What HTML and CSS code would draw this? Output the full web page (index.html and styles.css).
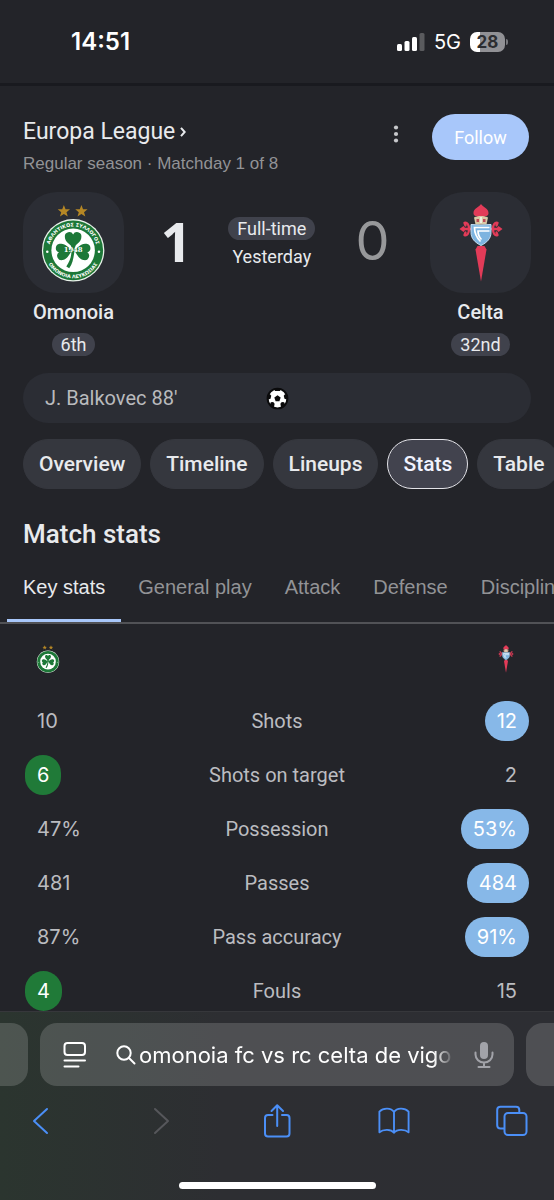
FILE: index.html
```html
<!DOCTYPE html>
<html lang="en">
<head>
<meta charset="utf-8">
<meta name="viewport" content="width=device-width, initial-scale=1">
<title>Omonoia vs Celta – Match stats</title>
<link rel="stylesheet" href="styles.css">
</head>
<body>
<svg class="defs" aria-hidden="true">
  <symbol id="crest-omonoia" viewBox="0 0 70 80">
    <path fill="#b58725" d="M25.500 1l1.700 4.300 4.600.2-3.600 2.900 1.300 4.500-4-2.600-4 2.600 1.300-4.500-3.600-2.900 4.600-.2z"/>
    <path fill="#b58725" d="M43.500 1l1.700 4.300 4.600.2-3.600 2.900 1.300 4.500-4-2.600-4 2.600 1.300-4.500-3.600-2.900 4.600-.2z"/>
    <circle cx="35" cy="47.500" r="32" fill="#e9f2ea"/>
    <circle cx="35" cy="47.500" r="30.700" fill="#1d7838"/>
    <circle cx="35" cy="47.500" r="22.300" fill="#fff"/>
    <g fill="#1d7838">
      <path transform="translate(35 46)" d="M0 0C-2-5-8.500-6.500-8.500-12.500a4.500 4.500 0 0 1 8.500-2.300a4.500 4.500 0 0 1 8.500 2.300C8.500-6.500 2-5 0 0z"/>
      <path transform="translate(35 47) rotate(-100)" d="M0 0C-3-5-8.500-6.500-8.500-12.500a4.500 4.500 0 0 1 8.500-2.300a4.500 4.500 0 0 1 8.500 2.300C8.500-6.500 3-5 0 0z"/>
      <path transform="translate(35 47) rotate(100)" d="M0 0C-3-5-8.500-6.500-8.500-12.500a4.500 4.500 0 0 1 8.500-2.300a4.500 4.500 0 0 1 8.500 2.300C8.500-6.500 3-5 0 0z"/>
      <path d="M33 42h4.500c-2 9-1.500 17-6.500 24l-3-2C33 57 34 50 33 42z"/>
    </g>
    <circle cx="8.500" cy="49" r="1.300" fill="#fff"/>
    <circle cx="61.500" cy="49" r="1.300" fill="#fff"/>
  </symbol>
  <symbol id="crest-celta" viewBox="0 0 44 78">
    <g fill="#e23b58">
      <path d="M22 0c1.500 3 8 4.500 7.500 9.500-.3 2.500-2.500 3-3.500 2.500l-.5 2h-7l-.5-2c-1 .5-3.200 0-3.500-2.500C14 4.500 20.500 3 22 0z"/>
      <path d="M18.500 42h7l2 3.500L22 77.500 16.500 45.500z"/>
      <path d="M.5 25l4-3 1.500 1.800h6v2.400H6L4.500 28z"/>
      <path d="M43.500 25l-4-3-1.500 1.800h-6v2.400h6l1.500 1.800z"/>
    </g>
    <g fill="none" stroke="#e23b58" stroke-width="2.300" stroke-linecap="round">
      <path d="M10 25C10 20.500 8 18 5.500 18.800M10 25C10 29.500 8 32 5.500 31.200M6.500 21.500l-1-2.500M6.500 28.500l-1 2.500"/>
      <path d="M34 25c0-4.500 2-7 4.500-6.200M34 25c0 4.500 2 7 4.500 6.200M37.500 21.500l1-2.500M37.500 28.500l1 2.500"/>
    </g>
    <path fill="#d9c9a5" d="M15 13.500c4-2 10-2 14 0l-1.500 7h-11z"/>
    <path fill="#bd4a58" d="M17.500 15h2.500v3h-2.500zM24 15h2.500v3H24z"/>
    <path fill="#eef0e0" d="M21 13h2v6h-2z"/>
    <path fill="#7db4e0" stroke="#c4def2" stroke-width="1" d="M12 20.500q10 1 20 0v8c0 6-4 10-10 13-6-3-10-7-10-13z"/>
    <path fill="none" stroke="#fff" stroke-width="1.700" d="M30.500 23.500H15.500c0 6 2 10 6 14M30.500 27H19c0 3 1 6 3.500 8.500"/>
  </symbol>
</svg>

<div class="phone">
  <header class="status">
    <time class="clock">14:51</time>
    <div class="signals">
      <svg class="bars" viewBox="0 0 28 18" aria-label="Signal"><g fill="#fff"><rect y="11" width="5" height="7" rx="1.500"/><rect x="7.500" y="8" width="5" height="10" rx="1.500"/><rect x="15" y="4" width="5" height="14" rx="1.500"/><rect x="22.500" y="0" width="5" height="18" rx="1.500" opacity=".25"/></g></svg>
      <span class="network">5G</span>
      <span class="battery">28</span>
    </div>
  </header>

  <main class="match">
    <section class="competition">
      <div class="competition-text">
        <h1><a href="#league">Europa League<svg viewBox="0 0 6 10" aria-hidden="true"><path d="M1 .8 4.700 5 1 9.200"/></svg></a></h1>
        <p>Regular season · Matchday 1 of 8</p>
      </div>
      <button class="more" type="button" aria-label="More options"><svg viewBox="0 0 6 20"><circle cx="3" cy="3.500" r="2.100"/><circle cx="3" cy="10" r="2.100"/><circle cx="3" cy="16.500" r="2.100"/></svg></button>
      <button class="follow" type="button">Follow</button>
    </section>

    <section class="scoreboard" aria-label="Score">
      <div class="team">
        <div class="tile">
          <svg class="crest" viewBox="0 0 70 80" role="img" aria-label="Omonoia crest">
            <use href="#crest-omonoia"/>
            <path id="arc-top" fill="none" d="M10.500 47.500a24.500 24.500 0 0 1 49 0"/>
            <path id="arc-bottom" fill="none" d="M6.300 47.500a28.700 28.700 0 0 0 57.400 0"/>
            <g class="crest-text">
              <text><textPath href="#arc-top" startOffset="50%">ΑΘΛΗΤΙΚΟΣ ΣΥΛΛΟΓΟΣ</textPath></text>
              <text><textPath href="#arc-bottom" startOffset="50%">ΟΜΟΝΟΙΑ ΛΕΥΚΩΣΙΑΣ</textPath></text>
              <text class="year" x="35" y="49">1948</text>
            </g>
          </svg>
        </div>
        <span class="team-name">Omonoia</span>
        <span class="pill">6th</span>
      </div>
      <strong class="score winner">1</strong>
      <div class="state">
        <span class="pill">Full-time</span>
        <span>Yesterday</span>
      </div>
      <span class="score">0</span>
      <div class="team">
        <div class="tile"><svg class="crest" viewBox="0 0 44 78" role="img" aria-label="Celta crest"><use href="#crest-celta"/></svg></div>
        <span class="team-name">Celta</span>
        <span class="pill">32nd</span>
      </div>
    </section>

    <section class="goals" aria-label="Goals">
      <span>J. Balkovec 88'</span>
      <svg viewBox="0 0 24 24" role="img" aria-label="Goal">
        <circle cx="12" cy="12" r="10.300" fill="#fff" stroke="#0b0b0c" stroke-width="2"/>
        <g fill="#0b0b0c"><path d="M12 8.600l3.300 2.400-1.300 3.900h-4l-1.300-3.900z"/><path d="M8 1.500h8l-1.500 2.800h-5zM1 8.500l3-1.200 1.500 1.900-.8 3-3.700 1.300zM23 8.500l-3-1.200-1.500 1.900.8 3 3.700 1.300zM4 19l1-3.200 2.500-.2 1.500 2-.8 4.400zM20 19l-1-3.200-2.500-.2-1.500 2 .8 4.400z"/></g>
      </svg>
    </section>

    <nav class="chips" aria-label="Match sections">
      <a href="#overview">Overview</a>
      <a href="#timeline">Timeline</a>
      <a href="#lineups">Lineups</a>
      <a href="#stats" class="current" aria-current="page">Stats</a>
      <a href="#table">Table</a>
    </nav>

    <h2 id="stats">Match stats</h2>

    <div class="tabs" role="tablist" aria-labelledby="stats">
      <button type="button" role="tab" aria-selected="true">Key stats</button>
      <button type="button" role="tab" aria-selected="false">General play</button>
      <button type="button" role="tab" aria-selected="false">Attack</button>
      <button type="button" role="tab" aria-selected="false">Defense</button>
      <button type="button" role="tab" aria-selected="false">Discipline</button>
    </div>

    <table class="stats" aria-labelledby="stats">
      <thead>
        <tr>
          <th scope="col"><svg class="mini" viewBox="0 0 70 80" role="img" aria-label="Omonoia"><use href="#crest-omonoia"/></svg></th>
          <td></td>
          <th scope="col"><svg class="mini" viewBox="0 0 44 78" role="img" aria-label="Celta"><use href="#crest-celta"/></svg></th>
        </tr>
      </thead>
      <tbody>
        <tr><td><span class="value">10</span></td><th scope="row">Shots</th><td><span class="value away">12</span></td></tr>
        <tr><td><span class="value home">6</span></td><th scope="row">Shots on target</th><td><span class="value">2</span></td></tr>
        <tr><td><span class="value">47%</span></td><th scope="row">Possession</th><td><span class="value away">53%</span></td></tr>
        <tr><td><span class="value">481</span></td><th scope="row">Passes</th><td><span class="value away">484</span></td></tr>
        <tr><td><span class="value">87%</span></td><th scope="row">Pass accuracy</th><td><span class="value away">91%</span></td></tr>
        <tr><td><span class="value home">4</span></td><th scope="row">Fouls</th><td><span class="value">15</span></td></tr>
      </tbody>
    </table>
  </main>

  <footer class="browser">
    <div class="address-row">
      <div class="peek left"></div>
      <div class="address">
        <button type="button" aria-label="Page menu"><svg class="page-icon" viewBox="0 0 24 28"><rect x="1.500" y="2" width="20.500" height="12" rx="3"/><path d="M1.500 19.500h20.500M1.500 25.500h14"/></svg></button>
        <label class="query">
          <svg viewBox="0 0 20 20" aria-hidden="true"><circle cx="8" cy="8" r="6.700"/><path d="M13 13l5.500 5.500"/></svg>
          <input type="text" aria-label="Search" value="omonoia fc vs rc celta de vigo">
        </label>
        <button type="button" aria-label="Dictate"><svg class="mic" viewBox="0 0 20 28"><rect x="6" y="1" width="8" height="17" rx="4"/><path d="M1.500 11.500v2a8.500 8 0 0 0 17 0v-2M10 21.500v4.500M4.500 26h11"/></svg></button>
      </div>
      <div class="peek right"></div>
    </div>
    <nav class="toolbar" aria-label="Browser">
      <button type="button" aria-label="Back"><svg viewBox="0 0 32 36"><path d="M22 6 9 18l13 12"/></svg></button>
      <button type="button" aria-label="Forward" disabled><svg viewBox="0 0 32 36"><path d="M12 6l13 12-13 12"/></svg></button>
      <button type="button" aria-label="Share"><svg viewBox="0 0 32 36"><path d="M11.500 12H7q-3 0-3 3v15.500q0 3 3 3h18.500q3 0 3-3V15q0-3-3-3H21M16.200 23V2.500M10.500 8l5.700-5.700L22 8"/></svg></button>
      <button type="button" aria-label="Bookmarks"><svg viewBox="0 0 34 36"><path d="M17 8.500C14 4 6 3.500 1.500 8v22c4-3.500 12.500-3.500 15.500.5 3-4 11.500-4 15.500-.5V8C28 3.500 20 4 17 8.500zM17 8.500v22"/></svg></button>
      <button type="button" aria-label="Tabs"><svg viewBox="0 0 32 36"><rect x="8.500" y="10" width="22" height="22" rx="3.500"/><path d="M8 25.500H4.500q-3.300 0-3.300-3.300V7q0-3.300 3.300-3.300H20q3.300 0 3.300 3.300v2.500"/></svg></button>
    </nav>
    <div class="home-indicator"></div>
  </footer>
</div>
</body>
</html>
```
FILE: styles.css
```css
* { box-sizing: border-box; }

body {
  margin: 0;
  background: #232429;
  color: #e8eaed;
  font-family: Roboto, "Noto Sans", sans-serif;
}

h1, h2, p { margin: 0; font-weight: 400; }
a { color: inherit; text-decoration: none; }
button {
  padding: 0;
  border: 0;
  background: none;
  color: inherit;
  font: inherit;
}
svg { display: block; }
.defs { position: absolute; width: 0; height: 0; }

.phone {
  display: flex;
  flex-direction: column;
  height: 100vh;
}

/* Status bar */
.status {
  display: flex;
  flex: none;
  align-items: center;
  justify-content: space-between;
  height: 86px;
  padding: 0 49px 0 71px;
  border-bottom: 3px solid #191a1f;
  color: #fff;
  font-family: Inter, sans-serif;
}
.clock { font-size: 24px; font-weight: 600; }
.signals { display: flex; align-items: center; gap: 9px; }
.bars { width: 28px; height: 18px; }
.network { font-size: 20px; }
.battery {
  position: relative;
  width: 35px;
  height: 20px;
  border-radius: 7px;
  background: linear-gradient(90deg, #fff 28%, #919195 28%);
  color: #2c2d31;
  font-size: 17px;
  font-weight: 700;
  line-height: 20px;
  text-align: center;
}
.battery::after {
  content: "";
  position: absolute;
  top: 7px;
  right: -3px;
  width: 2px;
  height: 6px;
  border-radius: 0 2px 2px 0;
  background: #77787c;
}

/* Competition header */
.match {
  flex: 1;
  min-height: 0;
  overflow: hidden auto;
  scrollbar-width: none;
}
.competition {
  display: flex;
  align-items: flex-start;
  padding: 28px 25px 0 23px;
}
.competition-text { flex: 1; }
.competition h1 {
  color: #e8eaed;
  font-size: 23px;
  line-height: 36px;
}
.competition h1 a { display: inline-flex; align-items: center; gap: 5px; }
.competition h1 svg {
  width: 6px;
  height: 10px;
  fill: none;
  stroke: #e8eaed;
  stroke-width: 2;
}
.competition p {
  color: #929396;
  font-family: "Liberation Sans", Arial, sans-serif;
  font-size: 17px;
  line-height: 28px;
}
.more { padding: 10px; margin-right: 23px; }
.more svg { width: 6px; height: 20px; fill: #c7c8cb; }
.follow {
  width: 97px;
  height: 46px;
  border-radius: 23px;
  background: #a8c7fa;
  color: #fff;
  font-size: 18px;
}

/* Scoreboard */
.scoreboard {
  display: grid;
  grid-template-columns: 101px 10fr auto 11fr 101px;
  padding: 14px 23px 0;
}
.team { display: flex; flex-direction: column; align-items: center; }
.tile {
  display: grid;
  place-items: center;
  width: 101px;
  height: 101px;
  border-radius: 34px;
  background: #2b2d34;
}
.crest { height: 78px; }
.crest-text {
  fill: #fff;
  font: 700 5px "DejaVu Sans", sans-serif;
  text-anchor: middle;
}
.crest-text .year { font: 700 7px "DejaVu Serif", serif; }
.team-name {
  margin: 4px 0 6px;
  font-size: 20px;
  font-weight: 500;
  line-height: 30px;
}
.pill {
  padding: 0 9px;
  border-radius: 12px;
  background: #40424c;
  font-size: 18px;
  line-height: 23px;
}
.score {
  padding-top: 17px;
  color: #97989a;
  font-family: Inter, sans-serif;
  font-size: 54px;
  line-height: 64px;
  text-align: center;
}
.winner { color: #e8eaed; font-family: "Open Sans", sans-serif; font-weight: 700; }
.state {
  display: flex;
  flex-direction: column;
  align-items: center;
  gap: 5px;
  padding-top: 25px;
  font-size: 18px;
  line-height: 23px;
}

.goals {
  display: grid;
  grid-template-columns: 1fr auto 1fr;
  align-items: center;
  height: 50px;
  margin: 17px 23px 16px;
  padding: 0 22px;
  border-radius: 25px;
  background: #2b2d34;
  color: #b9babd;
  font-size: 20px;
}
.goals svg { width: 23px; height: 23px; }

/* Section chips */
.chips {
  display: flex;
  gap: 9px;
  padding-left: 23px;
  overflow: hidden;
}
.chips a {
  flex: none;
  padding: 0 15px;
  border: 1px solid #35373e;
  border-radius: 25px;
  background: #35373e;
  font-size: 21px;
  font-weight: 500;
  line-height: 48px;
}
.chips .current { border-color: #e3e3e8; background: #42434e; color: #f1f3ff; }

h2 {
  padding: 29px 23px 0;
  font-size: 26px;
  font-weight: 500;
  line-height: 32px;
}

/* Statistic tabs */
.tabs {
  display: flex;
  gap: 1px;
  margin-top: 8px;
  padding-left: 7px;
  overflow: hidden;
  border-bottom: 2px solid #515256;
  color: #929396;
  font-family: "Liberation Sans", Arial, sans-serif;
  font-size: 20px;
  line-height: 58px;
}
.tabs button {
  flex: none;
  padding: 0 16px 3px;
  border-bottom: 3px solid transparent;
}
.tabs [aria-selected="true"] { border-color: #a8c7fa; color: #e8eaed; }

/* Statistics */
.stats {
  width: 100%;
  padding: 0 23px;
  border-spacing: 0;
  table-layout: fixed;
  color: #bbbcc0;
}
.stats tr { height: 54px; }
.stats thead tr { height: 70px; }
.stats th, .stats td { padding: 0 2px; font-weight: 400; text-align: center; }
.stats tbody th { font-size: 20px; white-space: nowrap; }
.stats tr > :first-child { width: 25%; text-align: left; }
.stats tr > :last-child { width: 25%; text-align: right; }
.mini { display: inline-block; width: 26px; height: 28px; margin: 0 10px; vertical-align: middle; }
.value {
  display: inline-block;
  padding: 0 12px;
  border-radius: 20px;
  font-family: Inter, sans-serif;
  font-size: 20px;
  line-height: 40px;
}
.home { background: #207a38; color: #fff; }
.away { background: #87b8e8; color: #fff; }

/* Browser controls */
.browser {
  flex: none;
  padding: 11px 0;
  border-top: 1px solid #36373b;
  background: linear-gradient(90deg, #2b352f, #2d2e32 40%, #2d2e33);
}
.address-row { display: flex; gap: 12px; height: 63px; }
.peek, .address { background: rgba(255, 255, 255, .16); }
.peek { flex: 0 0 28px; }
.left { border-radius: 0 17px 17px 0; }
.right { border-radius: 17px 0 0 17px; }
.address {
  display: flex;
  flex: 1;
  align-items: center;
  min-width: 0;
  padding: 0 20px 0 23px;
  border-radius: 17px;
}
.page-icon {
  width: 24px;
  height: 28px;
  fill: none;
  stroke: #fff;
  stroke-width: 2;
  stroke-linecap: round;
}
.query {
  display: flex;
  flex: 1;
  align-items: center;
  gap: 3px;
  min-width: 0;
  margin: 0 20px 0 29px;
  -webkit-mask-image: linear-gradient(90deg, #000 94%, transparent);
  mask-image: linear-gradient(90deg, #000 94%, transparent);
}
.query svg {
  flex: none;
  width: 20px;
  height: 20px;
  fill: none;
  stroke: #fff;
  stroke-width: 2;
  stroke-linecap: round;
}
.query input {
  flex: 1;
  min-width: 0;
  padding: 0;
  border: 0;
  outline: 0;
  background: none;
  color: #fff;
  font: 400 22px Inter, sans-serif;
}
.mic {
  width: 20px;
  height: 28px;
  fill: none;
  stroke: #a2a3a9;
  stroke-width: 2;
  stroke-linecap: round;
}
.mic rect { fill: #a2a3a9; stroke: none; }
.toolbar {
  display: flex;
  justify-content: space-between;
  padding: 17px 26px 0 25px;
}
.toolbar svg {
  width: 32px;
  height: 36px;
  fill: none;
  stroke: #4b8ff7;
  stroke-width: 2;
  stroke-linecap: round;
  stroke-linejoin: round;
}
.toolbar [disabled] svg { stroke: #56575b; }
.home-indicator {
  width: 197px;
  height: 7px;
  margin: 43px auto 0;
  border-radius: 4px;
  background: #fff;
}
```
